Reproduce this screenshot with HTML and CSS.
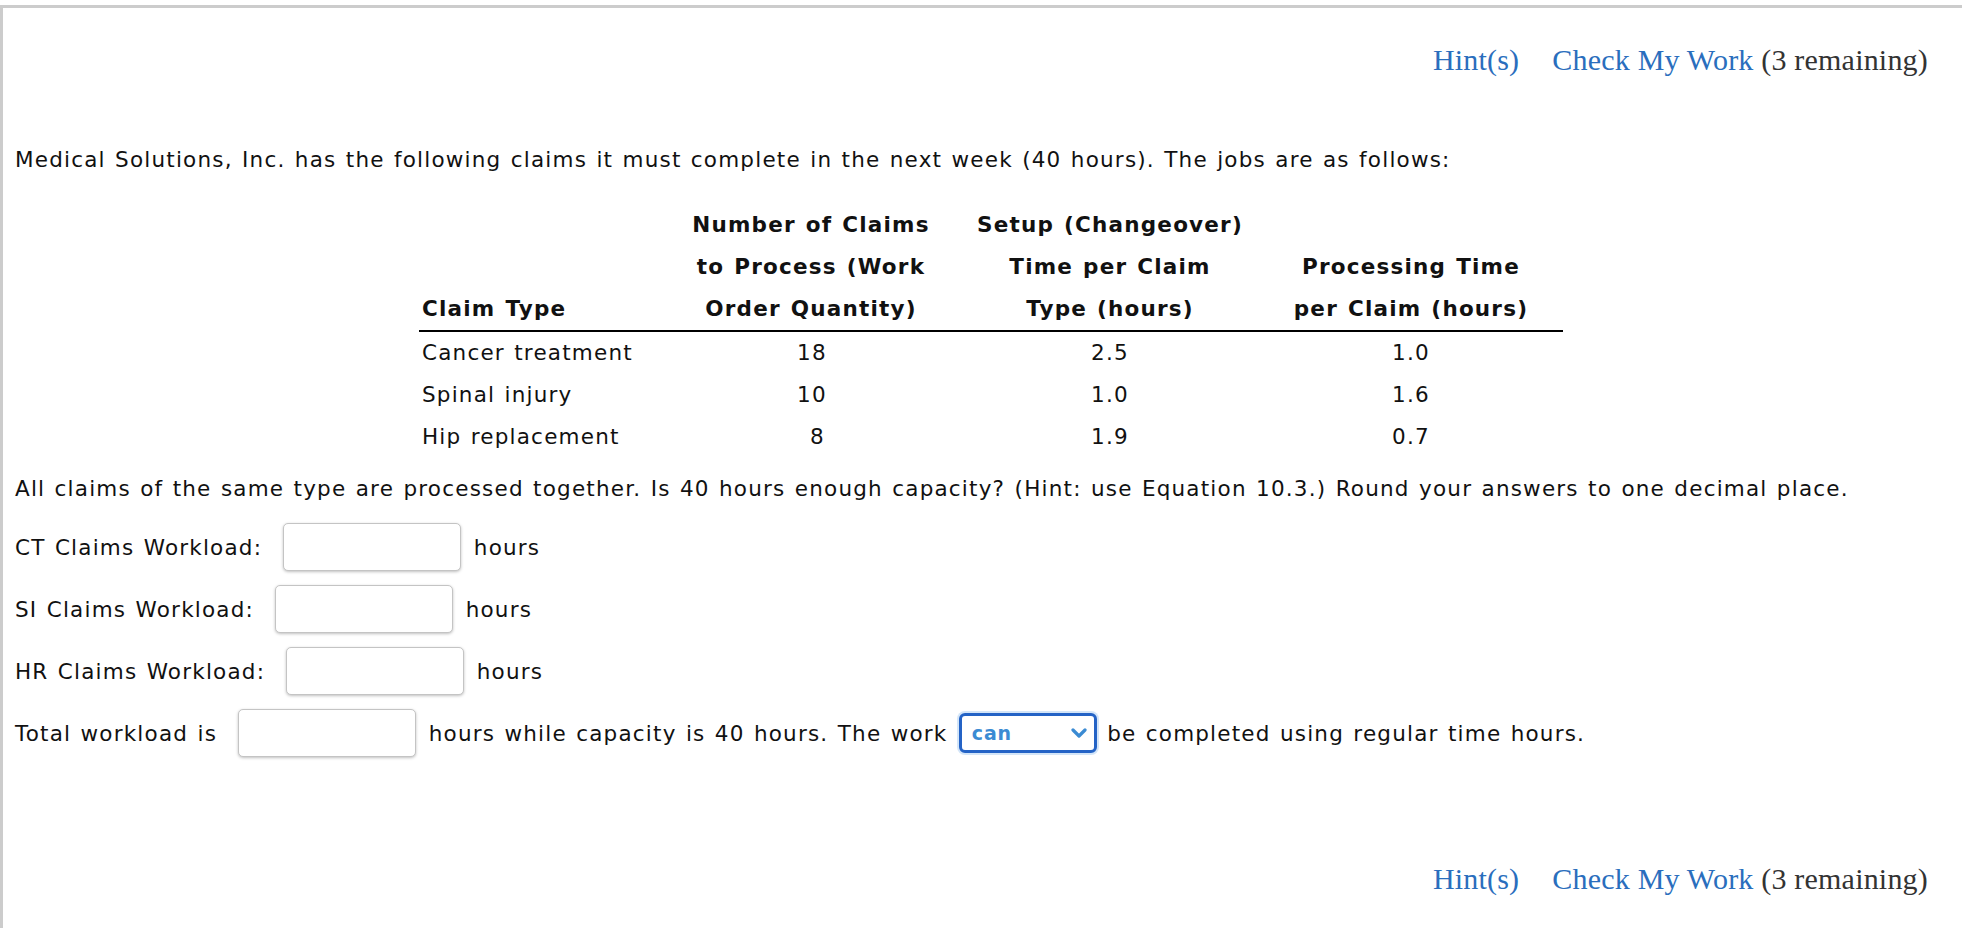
FILE: index.html
```html
<!DOCTYPE html>
<html>
<head>
<meta charset="utf-8">
<link rel="stylesheet" href="styles.css">
</head>
<body>
<div class="panel">
  <div class="toolbar">
    <a class="link">Hint(s)</a><a class="link check">Check My Work</a> <span class="remain">(3 remaining)</span>
  </div>
  <p class="intro">Medical Solutions, Inc. has the following claims it must complete in the next week (40 hours). The jobs are as follows:</p>
  <table class="claims">
    <thead>
      <tr>
        <th class="c1">Claim Type</th>
        <th class="c2">Number of Claims<br>to Process (Work<br>Order Quantity)</th>
        <th class="c3">Setup (Changeover)<br>Time per Claim<br>Type (hours)</th>
        <th class="c4">Processing Time<br>per Claim (hours)</th>
      </tr>
    </thead>
    <tbody>
      <tr><td class="c1">Cancer treatment</td><td class="c2"><span class="num">18</span></td><td class="c3">2.5</td><td class="c4">1.0</td></tr>
      <tr><td class="c1">Spinal injury</td><td class="c2"><span class="num">10</span></td><td class="c3">1.0</td><td class="c4">1.6</td></tr>
      <tr><td class="c1">Hip replacement</td><td class="c2"><span class="num">8</span></td><td class="c3">1.9</td><td class="c4">0.7</td></tr>
    </tbody>
  </table>
  <p class="instr">All claims of the same type are processed together. Is 40 hours enough capacity? (Hint: use Equation 10.3.) Round your answers to one decimal place.</p>
  <div class="row">CT Claims Workload: <input class="ans" type="text"> hours</div>
  <div class="row">SI Claims Workload: <input class="ans" type="text"> hours</div>
  <div class="row">HR Claims Workload: <input class="ans" type="text"> hours</div>
  <div class="row">Total workload is <input class="ans" type="text"> hours while capacity is 40 hours. The work <span class="sel"><select class="choice"><option>can</option><option>cannot</option></select><svg class="chev" width="16" height="12" viewBox="0 0 16 12"><path d="M2 3 L8 9 L14 3" fill="none" stroke="#3b8bd3" stroke-width="3.2" stroke-linecap="round" stroke-linejoin="round"/></svg></span> be completed using regular time hours.</div>
  <div class="toolbar bottom">
    <a class="link">Hint(s)</a><a class="link check">Check My Work</a> <span class="remain">(3 remaining)</span>
  </div>
</div>
</body>
</html>
```
FILE: styles.css
```css
html, body {
  margin: 0;
  padding: 0;
  background: #fff;
}
body {
  font-family: "DejaVu Sans", Verdana, sans-serif;
  font-size: 21.5px;
  letter-spacing: 1.2px;
  word-spacing: 1.3px;
  color: #111;
}
.panel {
  margin-top: 5px;
  border-top: 3px solid #cccccc;
  border-left: 3px solid #cccccc;
  padding-left: 12px;
  height: calc(100vh - 5px);
  box-sizing: border-box;
}
.toolbar {
  padding: 32px 34px 0 0;
  line-height: 40px;
  height: 40px;
  text-align: right;
  font-family: "Liberation Serif", Georgia, serif;
  font-size: 30px;
  letter-spacing: 0.2px;
  word-spacing: 0;
}
.toolbar.bottom {
  margin-top: 102px;
  padding-top: 0;
}
.link {
  color: #2a6ebd;
  text-decoration: none;
}
.check {
  margin-left: 33px;
}
.remain {
  color: #333;
}
.intro {
  margin: 65px 0 0 0;
  line-height: 30px;
}
.claims {
  margin: 29px 0 0 404px;
  border-collapse: collapse;
}
.claims th {
  font-weight: bold;
  line-height: 42px;
  vertical-align: bottom;
  padding: 0;
  border-bottom: 2px solid #000;
  text-align: center;
  white-space: nowrap;
}
.claims td {
  line-height: 42px;
  padding: 0;
  text-align: center;
}
.claims th.c1, .claims td.c1 {
  text-align: left;
  padding-left: 3px;
}
.c1 { width: 239px; }
.c2 { width: 300px; }
.c3 { width: 298px; }
.c4 { width: 304px; }
.num {
  display: inline-block;
  width: 28px;
  text-align: right;
}
.instr {
  margin: 16px 0 0 0;
  line-height: 30px;
}
.row {
  display: flex;
  align-items: center;
  height: 48px;
  margin-top: 14px;
  white-space: pre;
}
.instr + .row {
  margin-top: 19px;
}
.ans {
  box-sizing: border-box;
  width: 178px;
  height: 48px;
  margin: 0 3px 0 12px;
  border: 1px solid #c4c4c4;
  border-radius: 5px;
  box-shadow: 0 1px 3px rgba(0, 0, 0, 0.25);
  background: #fff;
  font: inherit;
  padding: 0 8px;
}
.sel {
  position: relative;
  display: inline-block;
  margin: 0 1px 0 2px;
}
.choice {
  appearance: none;
  -webkit-appearance: none;
  box-sizing: border-box;
  width: 138px;
  height: 40px;
  border: 3px solid #2463c6;
  border-radius: 6px;
  box-shadow: 0 0 0 2px #d3e5f8;
  background: #fff;
  font-family: "DejaVu Sans", Verdana, sans-serif;
  font-weight: bold;
  font-size: 19px;
  letter-spacing: 0.8px;
  color: #3b8bd3;
  padding: 0 0 0 10px;
  display: block;
}
.chev {
  position: absolute;
  right: 10px;
  top: 14px;
  pointer-events: none;
}
```
